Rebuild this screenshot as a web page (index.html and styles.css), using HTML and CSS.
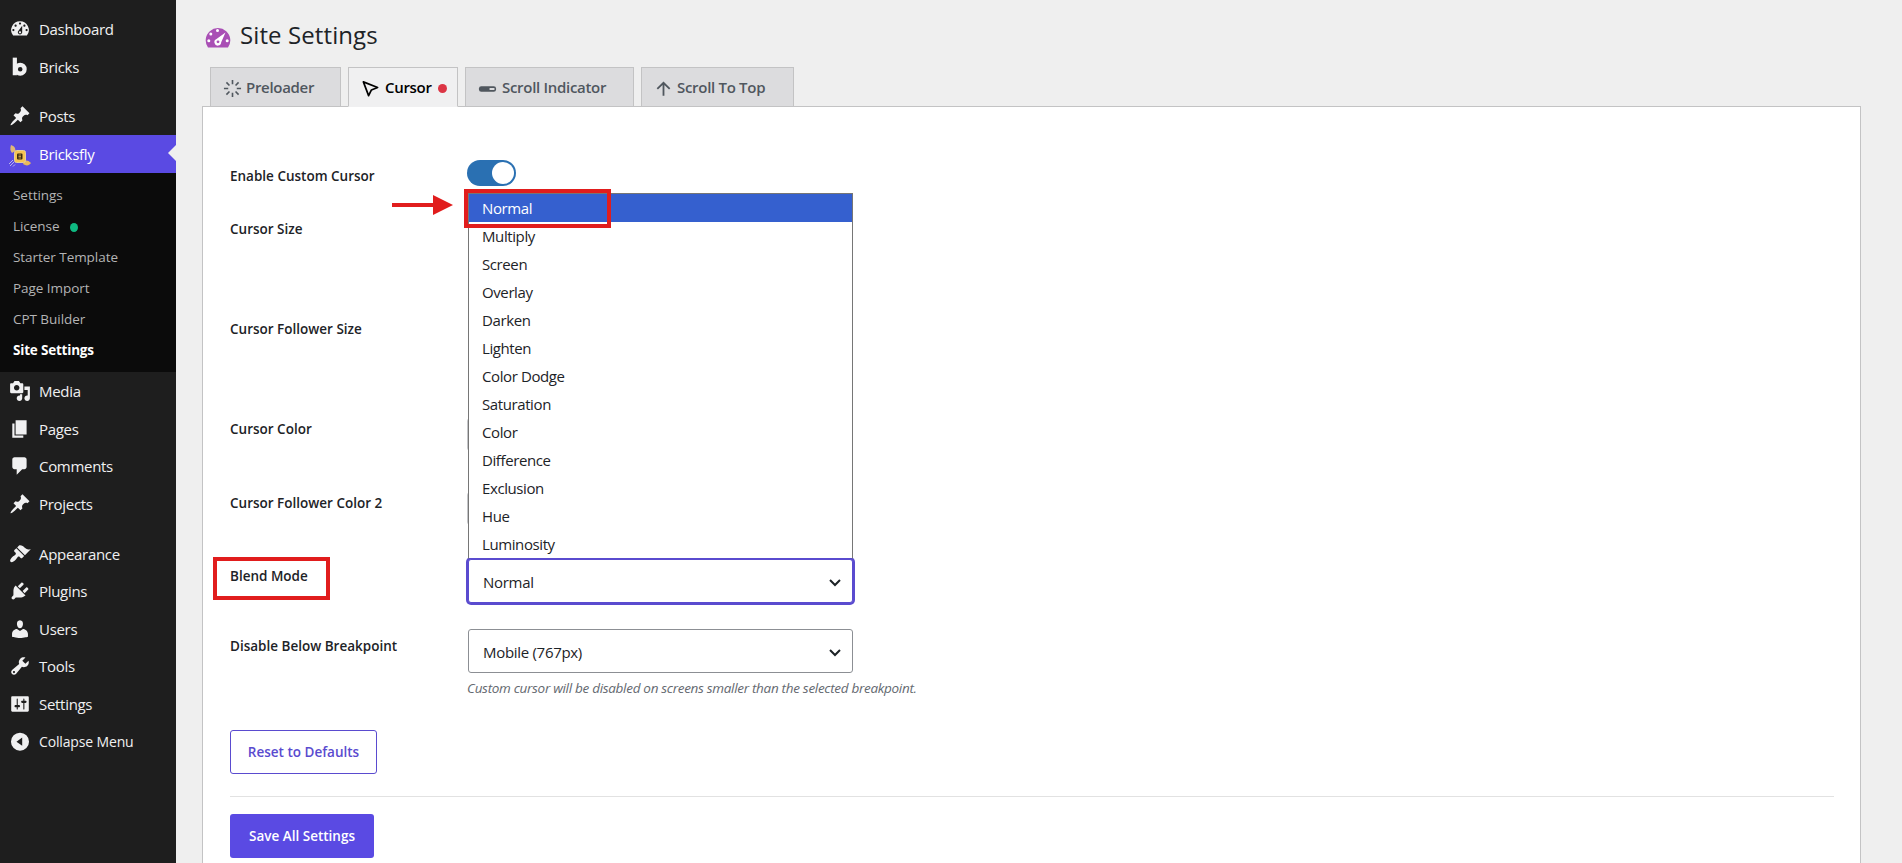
FILE: index.html
```html
<!DOCTYPE html>
<html lang="en">
<head>
    <meta charset="UTF-8">
    <meta name="viewport" content="width=device-width, initial-scale=1.0">
    <title>Site Settings</title>
    <link rel="stylesheet" href="styles.css">
</head>
<body>
    <nav class="sidebar">
        <a class="menu-item"><svg class="menu-icon" viewBox="0 0 20 20"><path fill-rule="evenodd" d="M3.76 16h12.48A7.998 7.998 0 0 0 10 3a7.998 7.998 0 0 0-6.24 13zM10 4c.55 0 1 .45 1 1s-.45 1-1 1-1-.45-1-1 .45-1 1-1zM6 6c.55 0 1 .45 1 1s-.45 1-1 1-1-.45-1-1 .45-1 1-1zm8 0c.55 0 1 .45 1 1s-.45 1-1 1-1-.45-1-1 .45-1 1-1zm-5.37 5.55L12 7v6c0 1.1-.9 2-2 2s-2-.9-2-2c0-.57.24-1.08.63-1.45zM4 10c.55 0 1 .45 1 1s-.45 1-1 1-1-.45-1-1 .45-1 1-1zm12 0c.55 0 1 .45 1 1s-.45 1-1 1-1-.45-1-1 .45-1 1-1zm-5 3c0-.55-.45-1-1-1s-1 .45-1 1 .45 1 1 1 1-.45 1-1z"/></svg><span>Dashboard</span></a>
        <a class="menu-item"><svg class="menu-icon" viewBox="0 0 20 20"><rect x="3.4" y="1.5" width="3.8" height="16"/><circle cx="10.2" cy="12" r="4" fill="none" stroke="currentColor" stroke-width="3.8"/></svg><span>Bricks</span></a>
        <div class="separator"></div>
        <a class="menu-item"><svg class="menu-icon" viewBox="0 0 20 20"><path d="M10.44 3.02l1.82-1.82 6.36 6.35-1.83 1.82c-1.05-.68-2.48-.57-3.41.36l-.75.75c-.92.93-1.04 2.35-.35 3.41l-1.83 1.82-2.41-2.41-2.8 2.79c-.42.42-3.38 2.71-3.8 2.29s1.86-3.39 2.28-3.81l2.79-2.79L4.1 9.36l1.83-1.82c1.05.69 2.48.57 3.4-.36l.75-.75c.93-.92 1.05-2.35.36-3.41z"/></svg><span>Posts</span></a>
        <a class="menu-item active"><svg class="menu-icon brand-icon" viewBox="0 0 22 22">
            <path d="M2 0c3 1 5 3 4 6L3 8C1 6 1 3 2 0z" fill="#e0b878"/>
            <path d="M14 19c1-4 4-5 8-1-2 3-5 3-8 1z" fill="#e9b95c"/>
            <rect x="5.500" y="5.500" width="11" height="12" rx="2" fill="#f6c453" stroke="#e5cf9a"/>
            <rect x="8" y="8.500" width="5.500" height="6" rx="1" fill="#3a2a12"/>
            <path d="M9.500 10h2.500M9.500 11.500h2.500M9.500 13h2.500" stroke="#f6c453" stroke-width=".7"/>
            <path d="M0 19l4-4M1 21l4-4M4 21.500l2-2" stroke="#b9b3ee" fill="none"/></svg><span>Bricksfly</span></a>
        <div class="submenu">
            <a>Settings</a>
            <a>License <i class="status-dot"></i></a>
            <a>Starter Template</a>
            <a>Page Import</a>
            <a>CPT Builder</a>
            <a class="current">Site Settings</a>
        </div>
        <a class="menu-item"><svg class="menu-icon" viewBox="0 0 20 20"><path d="M13 11V4c0-.55-.45-1-1-1h-1.670L9 1H5L3.670 3H2c-.55 0-1 .45-1 1v7c0 .55.45 1 1 1h10c.55 0 1-.45 1-1zM7 4.500c1.380 0 2.500 1.120 2.500 2.500S8.380 9.500 7 9.500 4.500 8.380 4.500 7 5.620 4.500 7 4.500zM14 6h5v10.500c0 1.380-1.120 2.500-2.500 2.500S14 17.880 14 16.500s1.120-2.500 2.500-2.500c.17 0 .34.02.5.05V9h-3V6zm-4 8.050V13h2v3.500c0 1.380-1.120 2.500-2.500 2.500S7 17.880 7 16.500 8.120 14 9.500 14c.17 0 .34.02.5.05z"/></svg><span>Media</span></a>
        <a class="menu-item"><svg class="menu-icon" viewBox="0 0 20 20"><path d="M6 15V2h10v13H6zm-1 1h8v2H3V5h2v11z"/></svg><span>Pages</span></a>
        <a class="menu-item"><svg class="menu-icon" viewBox="0 0 20 20"><path d="M5 2h9c1.1 0 2 .9 2 2v7c0 1.1-.9 2-2 2h-2l-5 5v-5H5c-1.1 0-2-.9-2-2V4c0-1.1.9-2 2-2z"/></svg><span>Comments</span></a>
        <a class="menu-item"><svg class="menu-icon" viewBox="0 0 20 20"><path d="M10.44 3.02l1.82-1.82 6.36 6.35-1.83 1.82c-1.05-.68-2.48-.57-3.41.36l-.75.75c-.92.93-1.04 2.35-.35 3.41l-1.83 1.82-2.41-2.41-2.8 2.79c-.42.42-3.38 2.71-3.8 2.29s1.86-3.39 2.28-3.81l2.79-2.79L4.1 9.36l1.83-1.82c1.05.69 2.48.57 3.4-.36l.75-.75c.93-.92 1.05-2.35.36-3.41z"/></svg><span>Projects</span></a>
        <div class="separator"></div>
        <a class="menu-item"><svg class="menu-icon" viewBox="0 0 20 20"><path d="M14.48 11.06L7.41 3.99l1.5-1.5c.5-.56 2.3-.47 3.51.32 1.21.8 1.43 1.28 2.91 2.1 1.18.64 2.45 1.26 4.45.85zm-.71.71L6.7 4.7 4.93 6.47c-.39.39-.39 1.02 0 1.41l1.06 1.06c.39.39.39 1.03 0 1.42-.6.6-1.43 1.11-2.21 1.69-.35.26-.7.53-1.01.84C1.43 14.23.4 16.08 1.4 17.07c.99 1 2.84-.03 4.18-1.36.31-.31.58-.66.85-1.02.57-.78 1.08-1.61 1.69-2.21.39-.39 1.02-.39 1.41 0l1.06 1.06c.39.39 1.02.39 1.41 0z"/></svg><span>Appearance</span></a>
        <a class="menu-item"><svg class="menu-icon" viewBox="0 0 20 20"><path d="M13.11 4.36L9.87 7.6 8 5.73l3.24-3.24c.35-.34 1.05-.2 1.56.32.52.51.66 1.21.31 1.55zm-8 1.77l.91-1.12 9.01 9.01-1.19.84c-.71.71-2.63 1.16-3.82 1.16H6.14L4.9 17.26c-.59.59-1.54.59-2.12 0-.59-.58-.59-1.53 0-2.12l1.24-1.24v-3.88c0-1.13.4-3.19 1.09-3.89zm7.26 3.97l3.24-3.24c.34-.35 1.04-.21 1.55.31.52.51.66 1.21.31 1.55l-3.24 3.25z"/></svg><span>Plugins</span></a>
        <a class="menu-item"><svg class="menu-icon" viewBox="0 0 20 20"><path d="M10 9.25c-2.27 0-2.73-3.44-2.73-3.44C7 4.02 7.82 2 9.97 2c2.16 0 2.98 2.02 2.71 3.81 0 0-.41 3.44-2.68 3.44zm0 2.57L12.72 10c2.39 0 4.52 2.33 4.52 4.53v2.49s-3.65 1.13-7.24 1.13c-3.65 0-7.24-1.13-7.24-1.13v-2.49c0-2.25 1.94-4.48 4.47-4.48z"/></svg><span>Users</span></a>
        <a class="menu-item"><svg class="menu-icon" viewBox="0 0 20 20"><path d="M16.68 9.77c-1.34 1.34-3.3 1.67-4.95.99l-5.41 6.52c-.99.99-2.59.99-3.58 0s-.99-2.59 0-3.57l6.52-5.42c-.68-1.65-.35-3.61.99-4.95 1.28-1.28 3.12-1.62 4.72-1.06l-2.89 2.89 2.82 2.82 2.86-2.87c.53 1.58.18 3.39-1.08 4.65zM3.81 16.21c.4.39 1.04.39 1.43 0 .4-.4.4-1.04 0-1.43-.39-.4-1.03-.4-1.43 0-.39.39-.39 1.03 0 1.43z"/></svg><span>Tools</span></a>
        <a class="menu-item"><svg class="menu-icon" viewBox="0 0 20 20"><path d="M18 16V4c0-.55-.45-1-1-1H3c-.55 0-1 .45-1 1v12c0 .55.45 1 1 1h14c.55 0 1-.45 1-1zM8 11h1c.55 0 1 .45 1 1s-.45 1-1 1H8v1.5c0 .28-.22.5-.5.5s-.5-.22-.5-.5V13H6c-.55 0-1-.45-1-1s.45-1 1-1h1V5.5c0-.28.22-.5.5-.5s.5.22.5.5V11zm5-2h-1c-.55 0-1-.45-1-1s.45-1 1-1h1V5.5c0-.28.22-.5.5-.5s.5.22.5.5V7h1c.55 0 1 .45 1 1s-.45 1-1 1h-1v5.5c0 .28-.22.5-.5.5s-.5-.22-.5-.5V9z"/></svg><span>Settings</span></a>
        <a class="menu-item collapse"><svg class="menu-icon" viewBox="0 0 20 20"><path fill-rule="evenodd" d="M10 1.500a8.200 8.200 0 1 0 0 16.400a8.200 8.200 0 0 0 0-16.400zM12 6v7.500L6.800 9.700z"/></svg><span>Collapse Menu</span></a>
    </nav>

    <main class="content">
        <h1 class="page-title">
            <svg class="title-icon" viewBox="0 0 26 22"><path fill="#a94fb5" d="M3 21.500A12.300 12.300 0 1 1 23 21.500z"/><g fill="#fff"><circle cx="12.500" cy="4.500" r="1.500"/><circle cx="5.800" cy="8" r="1.500"/><circle cx="3.800" cy="14.800" r="1.500"/><circle cx="22.200" cy="14.800" r="1.500"/><path d="M20.500 6.500l-4.300 9.800a3.400 3.400 0 1 1-4.700-3.200z"/></g><circle cx="13" cy="15.800" r="1.400" fill="#a94fb5"/></svg>
            Site Settings
        </h1>

        <div class="tabs">
            <a class="tab tab-preloader"><svg class="tab-icon" viewBox="0 0 20 20"><path d="M10 1v4.500M10 14.500V19M1 10h4.500M14.500 10H19M3.600 3.600l3.200 3.200M13.200 13.200l3.200 3.200M3.600 16.400l3.200-3.200M13.200 6.800l3.200-3.200" stroke="currentColor" stroke-width="1.700" fill="none"/></svg><span>Preloader</span></a>
            <a class="tab tab-cursor active"><svg class="tab-icon" viewBox="0 0 20 20"><path d="M2.500 3l15 6-6.500 2.500L8 17.500z" stroke="currentColor" stroke-width="1.800" stroke-linejoin="round" fill="none"/></svg><span>Cursor</span><i class="unsaved-dot"></i></a>
            <a class="tab tab-indicator"><svg class="tab-icon" viewBox="0 0 20 20"><rect x="1" y="7.500" width="18" height="6" rx="2.500" fill="currentColor"/><rect x="12" y="9.500" width="5.500" height="2" rx=".8" fill="#dcdcde"/></svg><span>Scroll Indicator</span></a>
            <a class="tab tab-top"><svg class="tab-icon" viewBox="0 0 20 20"><path d="M10 17.500V4M3.500 10.500L10 4l6.500 6.500" stroke="currentColor" stroke-width="1.900" fill="none"/></svg><span>Scroll To Top</span></a>
        </div>

        <section class="panel">
            <div class="row row-enable">
                <label>Enable Custom Cursor</label>
                <div class="control"><span class="toggle"></span></div>
            </div>
            <div class="row row-size"><label>Cursor Size</label></div>
            <div class="row row-size"><label>Cursor Follower Size</label></div>
            <div class="row row-color">
                <label>Cursor Color</label>
                <div class="control"><span class="swatch"></span></div>
            </div>
            <div class="row row-color">
                <label>Cursor Follower Color 2</label>
                <div class="control"><span class="swatch"></span></div>
            </div>
            <div class="row row-blend">
                <label class="marked">Blend Mode</label>
                <div class="control">
                    <div class="select focused">
                        <span>Normal</span>
                        <svg class="chevron" viewBox="0 0 12 8"><path d="M1 1l5 5 5-5"/></svg>
                        <ul class="options">
                            <li class="selected">Normal</li>
                            <li>Multiply</li>
                            <li>Screen</li>
                            <li>Overlay</li>
                            <li>Darken</li>
                            <li>Lighten</li>
                            <li>Color Dodge</li>
                            <li>Saturation</li>
                            <li>Color</li>
                            <li>Difference</li>
                            <li>Exclusion</li>
                            <li>Hue</li>
                            <li>Luminosity</li>
                        </ul>
                        <svg class="arrow" viewBox="0 0 61 20"><path d="M0 8h41V0l20 10-20 10v-8H0z"/></svg>
                    </div>
                </div>
            </div>
            <div class="row row-breakpoint">
                <label>Disable Below Breakpoint</label>
                <div class="control">
                    <div class="select">
                        <span>Mobile (767px)</span>
                        <svg class="chevron" viewBox="0 0 12 8"><path d="M1 1l5 5 5-5"/></svg>
                    </div>
                    <p class="help">Custom cursor will be disabled on screens smaller than the selected breakpoint.</p>
                </div>
            </div>
            <button class="button reset">Reset to Defaults</button>
            <div class="actions">
                <button class="button save">Save All Settings</button>
            </div>
        </section>
    </main>
</body>
</html>
```
FILE: styles.css
```css
*,
*::before,
*::after {
    box-sizing: border-box;
}

body {
    margin: 0;
    height: 863px;
    display: flex;
    overflow: hidden;
    background: #efefef;
    color: #1d2327;
    font-family: 'Segoe UI', 'Open Sans', 'Noto Sans', sans-serif;
    font-size: 14px;
}

/* Sidebar */
.sidebar {
    width: 176px;
    flex-shrink: 0;
    padding-top: 10.5px;
    background: #1e1e1e;
}

.menu-item {
    position: relative;
    display: flex;
    align-items: center;
    gap: 8px;
    height: 37.6px;
    padding-left: 9px;
    color: #f0f0f1;
    font-size: 15px;
    letter-spacing: -0.3px;
    white-space: nowrap;
}

.menu-icon {
    width: 22px;
    height: 22px;
    fill: currentColor;
    flex-shrink: 0;
}

.menu-item.active {
    background: #5a4ae3;
    color: #fff;
}

.menu-item.active::after {
    content: "";
    position: absolute;
    right: 0;
    top: 10px;
    border: 8.5px solid transparent;
    border-left: 0;
    border-right-color: #efefef;
}

.brand-icon {
    margin-top: 4px;
}

.menu-item.collapse {
    font-size: 14px;
    letter-spacing: -0.15px;
}

.separator {
    height: 12px;
}

.submenu {
    padding: 7px 0 6.5px;
    background: #0b0b0b;
}

.submenu a {
    display: flex;
    align-items: center;
    height: 31px;
    padding-left: 13px;
    color: #b4b4b5;
    font-size: 13.5px;
    letter-spacing: -0.05px;
}

.submenu .current {
    color: #fff;
    font-weight: 700;
    letter-spacing: -0.2px;
}

.status-dot {
    width: 8px;
    height: 9px;
    margin: 2px 0 0 11px;
    border-radius: 50%;
    background: #0fb981;
}

/* Header and tabs */
.content {
    flex: 1;
    display: flex;
    flex-direction: column;
    padding: 16px 41px 0 26px;
}

.page-title {
    display: flex;
    align-items: center;
    gap: 9px;
    height: 36px;
    margin: 0 0 15px 3px;
    font-size: 24px;
    font-weight: 400;
    letter-spacing: 0.1px;
}

.title-icon {
    width: 26px;
    height: 22px;
    margin-top: 6px;
}

.tabs {
    display: flex;
    gap: 7px;
    padding-left: 8px;
}

.tab {
    display: flex;
    align-items: center;
    height: 40px;
    padding: 0 0 0 12px;
    margin-bottom: -1px;
    gap: 4px;
    border: 1px solid #c3c3c4;
    background: #dcdcde;
    color: #50575e;
    font-size: 15px;
    font-weight: 600;
    letter-spacing: -0.3px;
    white-space: nowrap;
}

.tab.active {
    position: relative;
    background: #f0f0f1;
    border-bottom-color: #f0f0f1;
    color: #000;
}

.tab-icon {
    width: 19px;
    height: 19px;
    margin-top: 3px;
}

.tab-preloader {
    width: 131px;
}

.tab-cursor {
    width: 110px;
    gap: 5px;
}

.tab-indicator {
    width: 169px;
    gap: 5px;
}

.tab-top {
    width: 153px;
}

.unsaved-dot {
    width: 9px;
    height: 9px;
    margin: 3px 0 0 1px;
    border-radius: 50%;
    background: #dc3545;
}

/* Settings form */
.panel {
    flex: 1;
    padding: 43px 26px 0 27px;
    background: #fff;
    border: 1px solid #c3c3c4;
    border-bottom: 0;
}

.row {
    display: grid;
    grid-template-columns: 238px 385px;
    align-items: start;
    justify-content: start;
}

.row label {
    position: relative;
    justify-self: start;
    margin-top: 16px;
    line-height: 20px;
    font-size: 13.5px;
    font-weight: 600;
}

.row-enable {
    height: 53px;
}

.row-size {
    height: 100px;
}

.row-color {
    height: 73.5px;
}

.row-blend {
    height: 70px;
}

.row-breakpoint {
    height: 110px;
}

.control {
    padding-top: 9px;
}

.toggle {
    display: block;
    width: 49px;
    height: 26px;
    margin: 1px 0 0 -1px;
    padding: 2px;
    border-radius: 13px;
    background: #2a70b2;
}

.toggle::after {
    content: "";
    display: block;
    width: 22px;
    height: 22px;
    margin-left: 23px;
    border-radius: 50%;
    background: #fff;
}

.swatch {
    display: block;
    width: 60px;
    height: 33px;
    margin: 6px 0 0 -1px;
    border: 1px solid #c3c4c7;
    border-radius: 3px;
}

.select {
    position: relative;
    display: flex;
    align-items: center;
    justify-content: space-between;
    height: 44px;
    padding: 1px 11px 0 14px;
    border: 1px solid #8c8f94;
    border-radius: 3px;
    background: #fff;
    font-size: 15px;
    letter-spacing: -0.3px;
}

.select.focused {
    border-color: #5a4bcf;
    box-shadow: 0 0 0 2px #5a4bcf;
}

.chevron {
    width: 12px;
    height: 8px;
    margin-top: 2px;
    overflow: visible;
    fill: none;
    stroke: #1d2327;
    stroke-width: 2;
}

.options {
    position: absolute;
    left: 0;
    right: -1px;
    bottom: 43px;
    margin: 0 0 0 -1px;
    padding: 0;
    border: 1px solid #767676;
    border-bottom-color: #5a4bcf;
    list-style: none;
    background: #fff;
    letter-spacing: -0.4px;
}

.options li {
    height: 28px;
    padding-left: 13px;
    line-height: 28px;
}

.options .selected {
    background: #3560cf;
    color: #fff;
}

/* Red callouts */
.options .selected::after {
    content: "";
    position: absolute;
    left: -5px;
    top: -5px;
    width: 147px;
    height: 39px;
    border: 4px solid #e11d1d;
}

.marked::after {
    content: "";
    position: absolute;
    left: -17px;
    top: -9px;
    width: 117px;
    height: 43px;
    border: 4px solid #e11d1d;
}

.arrow {
    position: absolute;
    left: -77px;
    bottom: 387px;
    width: 61px;
    height: 20px;
    fill: #e11d1d;
}

.help {
    margin: 5px 0 0 -1px;
    line-height: 20px;
    color: #646970;
    font-size: 13.5px;
    font-style: italic;
    letter-spacing: -0.3px;
    white-space: nowrap;
}

/* Buttons */
.button {
    display: block;
    height: 44px;
    border-radius: 3px;
    font-family: inherit;
    font-size: 13.5px;
    font-weight: 600;
    padding: 0;
}

.reset {
    width: 147px;
    border: 1px solid #5a4bcf;
    background: #fff;
    color: #5a4bcf;
}

.save {
    width: 144px;
    border: 0;
    background: #5a4ae3;
    color: #fff;
}

.actions {
    margin-top: 22px;
    padding-top: 17px;
    border-top: 1px solid #e2e2e2;
}
```
